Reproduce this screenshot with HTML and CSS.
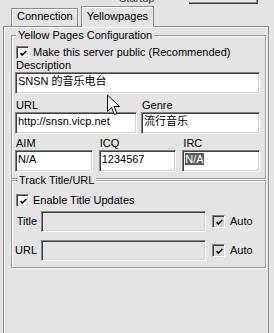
FILE: index.html
```html
<!DOCTYPE html>
<html lang="en">

<head>
    <meta charset="UTF-8">
    <title>Yellowpages</title>
    <link rel="stylesheet" href="styles.css">
</head>

<body>
    <div class="top">
        <span class="top-label">Startup</span>
        <span class="top-box"></span>
    </div>

    <div class="tabs">
        <div class="tab">Connection</div>
        <div class="tab active">Yellowpages</div>
    </div>

    <div class="panel">
        <div class="group yp">
            <div class="group-title">Yellow Pages Configuration</div>
            <div class="check">
                <span class="box"><svg viewBox="0 0 11 11"><path d="M2 5 L4 7.5 L9 2.5" /></svg></span>
                Make this server public (Recommended)
            </div>
            <div class="label">Description</div>
            <div class="input">SNSN 的音乐电台</div>

            <div class="row row-2">
                <div>
                    <div class="label">URL</div>
                    <div class="input">http://snsn.vicp.net</div>
                </div>
                <div>
                    <div class="label">Genre</div>
                    <div class="input">流行音乐</div>
                </div>
            </div>

            <div class="row row-3">
                <div>
                    <div class="label">AIM</div>
                    <div class="input">N/A</div>
                </div>
                <div>
                    <div class="label">ICQ</div>
                    <div class="input">1234567</div>
                </div>
                <div>
                    <div class="label">IRC</div>
                    <div class="input"><span class="sel">N/A</span></div>
                </div>
            </div>
        </div>

        <div class="group track">
            <div class="group-title">Track Title/URL</div>
            <div class="check">
                <span class="box"><svg viewBox="0 0 11 11"><path d="M2 5 L4 7.5 L9 2.5" /></svg></span>
                Enable Title Updates
            </div>
            <div class="track-row">
                <div class="label">Title</div>
                <div class="input off"></div>
                <div class="check auto">
                    <span class="box dim"><svg viewBox="0 0 11 11"><path d="M2 5 L4 7.5 L9 2.5" /></svg></span>
                    Auto
                </div>
            </div>
            <div class="track-row">
                <div class="label">URL</div>
                <div class="input off"></div>
                <div class="check auto">
                    <span class="box dim"><svg viewBox="0 0 11 11"><path d="M2 5 L4 7.5 L9 2.5" /></svg></span>
                    Auto
                </div>
            </div>
        </div>
    </div>

    <!-- mouse pointer left over the form -->
    <svg class="cursor" viewBox="0 0 13 21">
        <path d="M0.5 0.5 L0.5 17 L4.5 13 L7.5 20 L10 19 L7 12 L12.5 12 Z" />
    </svg>
</body>

</html>
```

FILE: styles.css
```css
* {
    box-sizing: border-box;
}

body {
    margin: 0;
    position: relative;
    background-color: #e4e4e4;
    font-family: "Liberation Sans", "Noto Sans CJK SC", sans-serif;
    font-size: 11px;
    line-height: 13px;
    color: #000;
    overflow: hidden;
}

/* strip of the window above, mostly cut off */
.top {
    height: 6px;
    overflow: hidden;
    display: flex;
    align-items: flex-end;
}

.top-label {
    margin-left: 119px;
    margin-bottom: 1px;
    color: #333;
}

.top-box {
    width: 69px;
    height: 12px;
    margin-left: 35px;
    margin-bottom: 2px;
    border-right: 1px solid #404040;
    border-bottom: 1px solid #404040;
    box-shadow: inset -1px -1px 0 #8c8c8c;
}

/* tabs */
.tabs {
    display: flex;
    align-items: flex-end;
    height: 20px;
    padding-left: 11px;
}

.tab {
    height: 18px;
    padding: 1px 4px 0 5px;
    border: 1px solid #8c8c8c;
    border-bottom: 0;
    box-shadow: inset 1px 1px 0 #fff;
}

.tab.active {
    position: relative;
    z-index: 1;
    height: 21px;
    margin-left: 3px;
    margin-bottom: -1px;
    padding: 3px 5px 0 5px;
    background-color: #e4e4e4;
}

.panel {
    width: 266px;
    height: 307px;
    margin-left: 3px;
    padding: 8px 2px 0 7px;
    border: 1px solid #8c8c8c;
    border-bottom: 0;
    box-shadow: inset 1px 1px 0 #fff;
}

/* group boxes */
.group {
    border: 1px solid #9a9a9a;
    box-shadow: inset 1px 1px 0 #fff, 1px 1px 0 #fff;
}

.group-title {
    width: fit-content;
    margin: -7px 0 0 1px;
    padding: 0 2px;
    background-color: #e4e4e4;
}

.yp {
    padding: 0 5px 6px 3px;
}

.track {
    margin-top: 1px;
    padding: 0 10px 6px 3px;
}

.track .group-title {
    margin-left: 2px;
}

/* checkboxes */
.check {
    display: flex;
    align-items: center;
    gap: 4px;
    height: 13px;
    margin: 4px 0 0 1px;
}

.track .check {
    margin-top: 7px;
}

.box {
    width: 13px;
    height: 13px;
    padding: 1px;
    border: 1px solid;
    border-color: #808080 #fff #fff #808080;
    box-shadow: inset 1px 1px 0 #404040, inset -1px -1px 0 #d4d4d4;
    background-color: #fff;
}

.box svg {
    display: block;
    width: 9px;
    height: 9px;
    margin: 1px 0 0 1px;
}

.box path {
    fill: none;
    stroke: #000;
    stroke-width: 2;
}

.box.dim {
    background-color: #d8d8d8;
}

/* text fields */
.label {
    margin-left: 1px;
}

.input {
    height: 22px;
    padding: 2px 0 0 2px;
    border: 1px solid;
    border-color: #808080 #fff #fff #808080;
    box-shadow: inset 1px 1px 0 #404040, inset -1px -1px 0 #d4d4d4;
    background-color: #fff;
    white-space: nowrap;
    overflow: hidden;
}

.input.off {
    height: 21px;
    background-color: #e4e4e4;
}

.sel {
    background-color: #5c5c5c;
    color: #fff;
}

.row {
    display: grid;
    margin-top: 5px;
}

.row-2 {
    grid-template-columns: 122px 1fr;
    column-gap: 4px;
}

.row-3 {
    grid-template-columns: 1fr 1fr 1fr;
    column-gap: 6px;
    margin-top: 3px;
}

.track-row {
    display: grid;
    grid-template-columns: 26px 165px auto;
    align-items: center;
    margin-top: 8px;
}

.track .check + .track-row {
    margin-top: 4px;
}

.track-row .label {
    margin: 0;
    padding-right: 4px;
    text-align: right;
}

.check.auto {
    margin: 0 0 0 6px;
    gap: 5px;
}

.cursor {
    position: absolute;
    left: 107px;
    top: 94px;
    width: 13px;
    height: 22px;
}

.cursor path {
    fill: #fff;
    stroke: #000;
    stroke-width: 1;
}
```
